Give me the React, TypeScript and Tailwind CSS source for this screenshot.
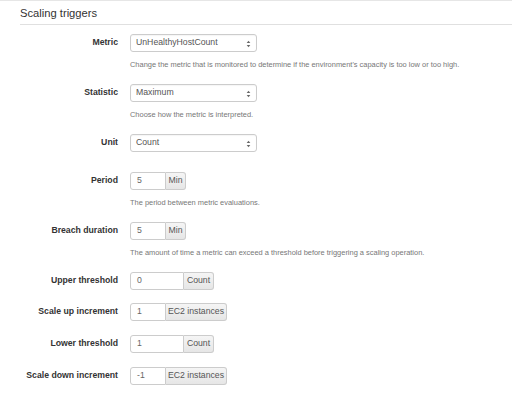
import React from "react";

const font = { fontFamily: '"Liberation Sans", Arial, Helvetica, sans-serif' };

function Arrows() {
  return (
    <svg width="5" height="8" viewBox="0 0 5 8" className="absolute right-[5px] top-[5px]">
      <path d="M0.7 3.1 L2.5 0.8 L4.3 3.1 Z" fill="#666" />
      <path d="M0.7 4.9 L2.5 7.2 L4.3 4.9 Z" fill="#666" />
    </svg>
  );
}

function Select({ value }: { value: string }) {
  return (
    <div className="relative w-[127px] h-[18px] border border-[#cccccc] rounded-[3px] bg-white flex items-center pl-[5px] text-[8.7px] text-[#555555] shadow-[inset_0_1px_1px_rgba(0,0,0,0.04)]">
      {value}
      <Arrows />
    </div>
  );
}

function InputAddon({ value, inputW, addon, addonW }: { value: string; inputW: string; addon: string; addonW: string }) {
  return (
    <div className="flex h-[18px] text-[8.7px]">
      <div className={`${inputW} h-full border border-[#cccccc] rounded-l-[3px] bg-white flex items-center pl-[6px] text-[#666666]`}>
        {value}
      </div>
      <div className={`${addonW} h-full border border-l-0 border-[#cccccc] rounded-r-[3px] bg-gradient-to-b from-[#f5f5f5] to-[#e6e6e6] flex items-center justify-center text-[#555555]`}>
        {addon}
      </div>
    </div>
  );
}

function Row({ label, children, help, mt }: { label: string; children: React.ReactNode; help?: string; mt: string }) {
  return (
    <div className={mt}>
      <div className="flex items-center h-[18px]">
        <div className="w-[118px] text-right font-bold text-[8.7px] text-[#333333]">{label}</div>
        <div className="ml-[12px]">{children}</div>
      </div>
      {help && (
        <div className="ml-[130px] mt-[8px] h-[10px] leading-[10px] text-[7.45px] text-[#777777] whitespace-nowrap">{help}</div>
      )}
    </div>
  );
}

export default function App() {
  return (
    <div style={font} className="w-[512px] h-[398px] bg-white border-t border-[#e6e6e6] overflow-hidden">
      <div className="ml-[20px] h-[24px] border-b border-[#e0e0e0] pt-[6px] leading-[13px] text-[11.2px] text-[#333333]">
        Scaling triggers
      </div>
      <Row
        mt="mt-[9px]"
        label="Metric"
        help="Change the metric that is monitored to determine if the environment's capacity is too low or too high."
      >
        <Select value="UnHealthyHostCount" />
      </Row>
      <Row mt="mt-[14px]" label="Statistic" help="Choose how the metric is interpreted.">
        <Select value="Maximum" />
      </Row>
      <Row mt="mt-[14px]" label="Unit">
        <Select value="Count" />
      </Row>
      <Row mt="mt-[20px]" label="Period" help="The period between metric evaluations.">
        <InputAddon value="5" inputW="w-[36px]" addon="Min" addonW="w-[20px]" />
      </Row>
      <Row
        mt="mt-[14px]"
        label="Breach duration"
        help="The amount of time a metric can exceed a threshold before triggering a scaling operation."
      >
        <InputAddon value="5" inputW="w-[36px]" addon="Min" addonW="w-[20px]" />
      </Row>
      <Row mt="mt-[14px]" label="Upper threshold">
        <InputAddon value="0" inputW="w-[54px]" addon="Count" addonW="w-[30px]" />
      </Row>
      <Row mt="mt-[13px]" label="Scale up increment">
        <InputAddon value="1" inputW="w-[36px]" addon="EC2 instances" addonW="w-[61px]" />
      </Row>
      <Row mt="mt-[14px]" label="Lower threshold">
        <InputAddon value="1" inputW="w-[54px]" addon="Count" addonW="w-[30px]" />
      </Row>
      <Row mt="mt-[14px]" label="Scale down increment">
        <InputAddon value="-1" inputW="w-[36px]" addon="EC2 instances" addonW="w-[61px]" />
      </Row>
    </div>
  );
}
